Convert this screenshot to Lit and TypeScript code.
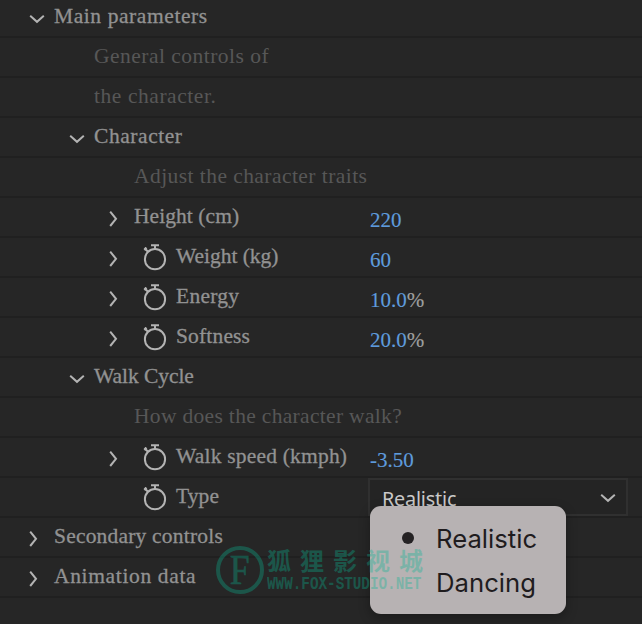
import { LitElement, html, css, svg, nothing } from "lit";
import { customElement } from "lit/decorators.js";
import { styleMap } from "lit/directives/style-map.js";

interface Row {
  label: string;
  level: 1 | 2 | 3;
  track: number;
  twirl?: "open" | "closed";
  note?: boolean;
  watch?: boolean;
  value?: string;
  unit?: string;
  select?: string;
}

const ROWS: Row[] = [
  { label: "Main parameters", level: 1, track: 0.58, twirl: "open" },
  { label: "General controls of", level: 2, track: 0.48, note: true },
  { label: "the character.", level: 2, track: 0.56, note: true },
  { label: "Character", level: 2, track: 0.56, twirl: "open" },
  { label: "Adjust the character traits", level: 3, track: 0.44, note: true },
  { label: "Height (cm)", level: 3, track: 0.06, twirl: "closed", value: "220" },
  { label: "Weight (kg)", level: 3, track: -0.04, twirl: "closed", watch: true, value: "60" },
  { label: "Energy", level: 3, track: 0.27, twirl: "closed", watch: true, value: "10.0", unit: "%" },
  { label: "Softness", level: 3, track: 0.16, twirl: "closed", watch: true, value: "20.0", unit: "%" },
  { label: "Walk Cycle", level: 2, track: -0.05, twirl: "open" },
  { label: "How does the character walk?", level: 3, track: 0.32, note: true },
  { label: "Walk speed (kmph)", level: 3, track: 0.2, twirl: "closed", watch: true, value: "-3.50" },
  { label: "Type", level: 3, track: 0.1, watch: true, select: "Realistic" },
  { label: "Secondary controls", level: 1, track: 0.2, twirl: "closed" },
  { label: "Animation data", level: 1, track: 0.65, twirl: "closed" },
];

const chevron = (open: boolean) => html`<svg class="chev" viewBox="0 0 16 16" width="16" height="16">
  ${open
    ? svg`<path d="M1.2 5.8 L8 11.8 L14.8 5.8" />`
    : svg`<path d="M5.2 1.6 L11 8.8 L5.2 16" />`}
</svg>`;

const stopwatch = html`<svg class="watch" viewBox="0 0 24 28" width="24" height="28">
  <circle cx="12" cy="16.2" r="10.1" />
  <path d="M8 2.3 H16 M12 2.3 V6 M1.4 5 L5 8.8 M1.3 7 L3.6 4.8" />
</svg>`;

@customElement("app-root")
export class AppRoot extends LitElement {
  static styles = css`
    :host {
      display: block;
      position: relative;
      width: 642px;
      height: 624px;
      overflow: hidden;
      background: #262626;
      font-family: "Liberation Serif", serif;
      font-size: 21.5px;
      color: #929292;
    }
    .rows {
      display: flex;
      flex-direction: column;
      margin-top: -2px;
    }
    .row {
      box-sizing: border-box;
      height: 40px;
      display: grid;
      grid-template: 38px / 370px 1fr;
      border-bottom: 2px solid #202020;
      white-space: pre;
    }
    .name {
      display: flex;
      align-items: center;
    }
    .l1 { padding-left: 25px; }
    .l2 { padding-left: 65px; }
    .l3 { padding-left: 105px; }
    .twirl {
      width: 29px;
      height: 16px;
      flex: none;
      padding-top: 2px;
    }
    .label {
      line-height: 38px;
      margin-top: -3px;
      -webkit-text-stroke: 0.3px currentColor;
    }
    .note {
      color: #575757;
      -webkit-text-stroke: 0;
    }
    svg {
      display: block;
      overflow: visible;
      fill: none;
      stroke: #b4b4b4;
      stroke-width: 2;
    }
    .chev { margin-left: 4px; }
    .closed .chev { margin-left: 0; }
    .watch {
      margin: -1px 9px 0 9px;
      flex: none;
    }
    .value {
      font-size: 21px;
      line-height: 44px;
      color: #5e9bdc;
      -webkit-text-stroke: 0.15px currentColor;
    }
    .unit { color: #a0a0a0; }
    .select {
      box-sizing: border-box;
      width: 260px;
      height: 38px;
      margin-left: -2px;
      padding: 0 10px 0 12px;
      border: 2px solid #303030;
      background: #242424;
      display: flex;
      justify-content: space-between;
      align-items: center;
      font-family: "Noto Sans", sans-serif;
      font-size: 19.8px;
      letter-spacing: -0.2px;
      color: #cacaca;
    }
    .select span { padding-top: 2px; }
    .menu {
      position: absolute;
      left: 370px;
      top: 506px;
      width: 196px;
      height: 108px;
      box-sizing: border-box;
      padding: 10px 0;
      border-radius: 11px;
      background: #b7b2b3;
      box-shadow: 0 4px 12px rgba(0, 0, 0, 0.3);
      font-family: Inter, sans-serif;
      font-size: 25.7px;
      color: #1f1c1e;
    }
    .item {
      height: 44px;
      display: grid;
      grid-template-columns: 66px 1fr;
      align-items: center;
    }
    .dot {
      width: 12px;
      height: 12px;
      border-radius: 50%;
      background: #252224;
      margin-left: 32px;
    }
    .mark {
      position: absolute;
      left: 216px;
      top: 546px;
      display: flex;
      gap: 3px;
      color: rgb(10, 180, 145);
      opacity: 0.34;
    }
    .ring {
      box-sizing: border-box;
      width: 48px;
      height: 48px;
      border: 4px solid currentColor;
      border-radius: 50%;
      display: flex;
      align-items: center;
      justify-content: center;
      font-size: 42px;
      line-height: 38px;
    }
    .letter {
      transform: scaleX(0.85);
      -webkit-text-stroke: 0.6px currentColor;
    }
    .cjk {
      font: bold 24px/28px "Noto Sans CJK SC", sans-serif;
      letter-spacing: 9px;
      height: 28px;
      white-space: nowrap;
    }
    .url {
      font: bold 14.3px/14px "Liberation Mono", monospace;
      margin-top: 3px;
      transform: scaleY(1.25);
    }
  `;

  private row(r: Row) {
    return html`<div class="row">
      <div class="name l${r.level}">
        <div class="twirl ${r.twirl ?? ""}">${r.twirl ? chevron(r.twirl === "open") : nothing}</div>
        ${r.watch ? stopwatch : nothing}
        <span class="label ${r.note ? "note" : ""}" style=${styleMap({ letterSpacing: `${r.track}px` })}>${r.label}</span>
      </div>
      ${r.value ? html`<div class="value">${r.value}<span class="unit">${r.unit ?? ""}</span></div>` : nothing}
      ${r.select ? html`<div class="select"><span>${r.select}</span>${chevron(true)}</div>` : nothing}
    </div>`;
  }

  render() {
    return html`
      <div class="rows">${ROWS.map((r) => this.row(r))}</div>
      <div class="menu">
        <div class="item"><span class="dot"></span><span>Realistic</span></div>
        <div class="item"><span></span><span>Dancing</span></div>
      </div>
      <div class="mark">
        <div class="ring"><span class="letter">F</span></div>
        <div>
          <div class="cjk">狐狸影视城</div>
          <div class="url">WWW.FOX-STUDIO.NET</div>
        </div>
      </div>
    `;
  }
}
